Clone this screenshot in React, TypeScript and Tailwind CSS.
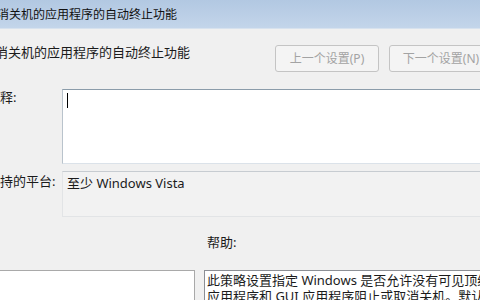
const FONT = "font-['Noto_Sans','Noto_Sans_CJK_SC',sans-serif]";

const POLICY_NAME = "关闭会阻止或取消关机的应用程序的自动终止功能";

function NavButton({ label }: { label: string }) {
  return (
    <button
      disabled
      className="h-[27px] w-[104px] shrink-0 rounded-[3px] border border-[#c4c4c4] bg-[#f4f4f4] text-[12px] leading-none text-[#a3a3a3]">
      {label}
    </button>
  );
}

export default function App() {
  return (
    <div
      className={`${FONT} relative h-[300px] w-[480px] overflow-hidden bg-[#f0f0f0] text-[#1b1b1b]`}>
      {/* window title bar */}
      <div className="flex h-[29px] items-center overflow-hidden border-b border-[#d7e2ee] bg-gradient-to-b from-[#b2c8e2] to-[#c3d5ea] pt-[2px]">
        <span className="-ml-[87px] whitespace-nowrap text-[12px] text-[#111]">
          {POLICY_NAME}
        </span>
      </div>

      <div className="-ml-[13px] w-[533px]">
        {/* policy name + prev / next */}
        <div className="mt-[14px] flex items-start pr-[27px]">
          <span className="-ml-[83px] whitespace-nowrap text-[13px] leading-[18px]">
            {POLICY_NAME}
          </span>
          <div className="ml-auto mt-[2px] flex gap-[10px]">
            <NavButton label="上一个设置(P)" />
            <NavButton label="下一个设置(N)" />
          </div>
        </div>

        {/* comment + supported on */}
        <div className="mt-[17px] grid grid-cols-[75px_1fr] gap-y-[7px] text-[13px]">
          <span className="-mt-[1px] leading-[18px]">注释:</span>
          <div className="relative h-[75px] border border-[#b9c3cc] border-t-[#8b9caa] border-b-[#dbe2e9] bg-white">
            <span className="absolute left-[4px] top-[3px] h-[15px] w-px bg-black" />
          </div>

          <span className="pt-[1px] leading-[18px]">支持的平台:</span>
          <div className="h-[46px] border border-[#e2e4e6] border-t-[#c7ccd1] bg-[#f2f2f2] px-[4px] pt-[2px] leading-[18px]">
            至少 Windows Vista
          </div>
        </div>

        {/* options / help */}
        <div className="mt-[16px] flex gap-[9px] text-[13px]">
          <div className="w-[208px] shrink-0" />
          <span className="pl-[3px] leading-[18px]">帮助:</span>
        </div>

        <div className="mt-[19px] flex gap-[9px]">
          <div className="h-[40px] w-[208px] shrink-0 border border-[#a9a9a9] bg-white" />
          <div className="h-[40px] flex-1 overflow-hidden border border-[#8c8f95] bg-white px-[2px] pt-[1px] text-[13px] leading-[16px]">
            <p className="whitespace-nowrap">
              此策略设置指定 Windows 是否允许没有可见顶级窗口的控制台
            </p>
            <p className="whitespace-nowrap">
              应用程序和 GUI 应用程序阻止或取消关机。默认情况下，
            </p>
          </div>
        </div>
      </div>
    </div>
  );
}
